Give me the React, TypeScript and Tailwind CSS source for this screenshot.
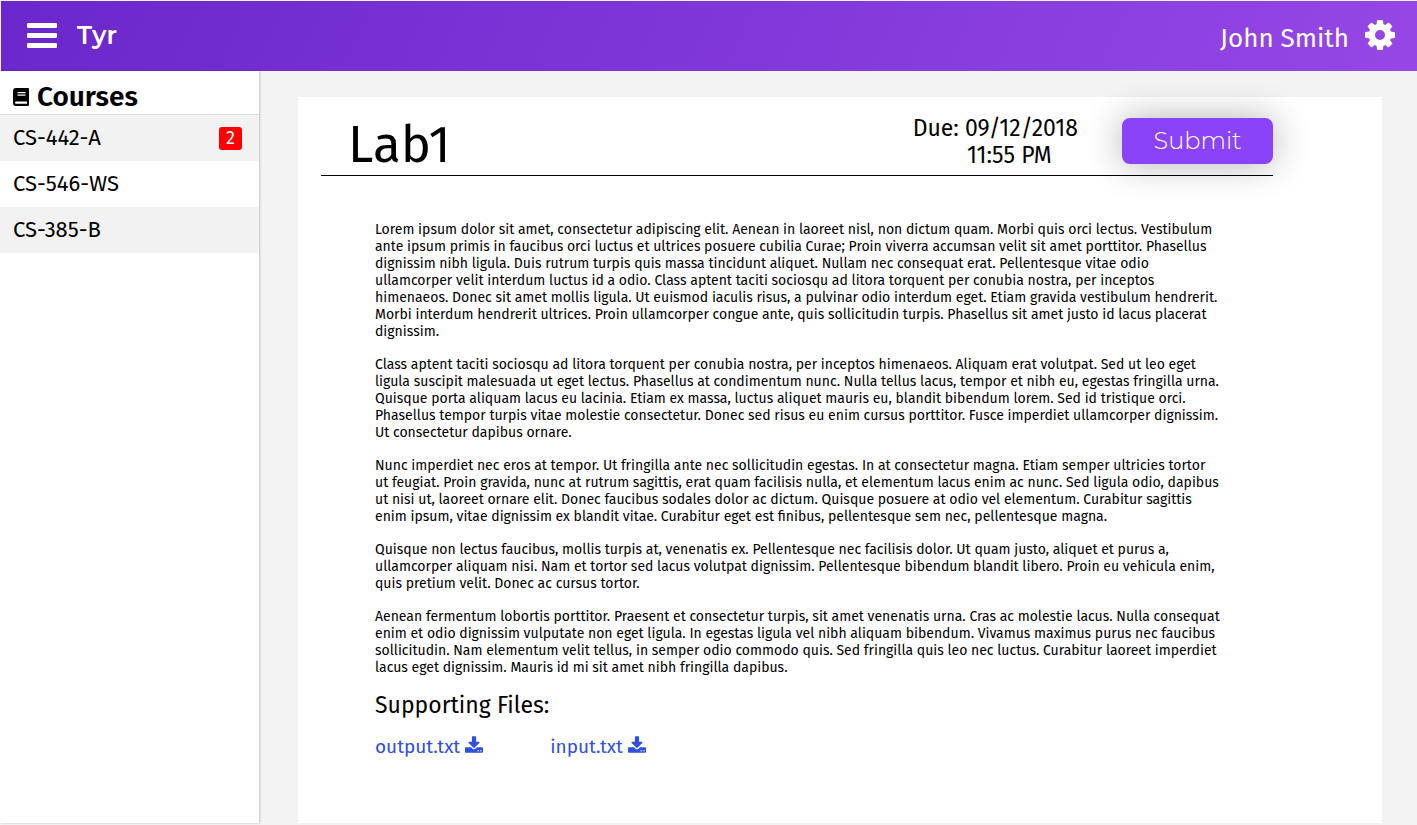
const courses = [
  { name: "CS-442-A", pending: 2 },
  { name: "CS-546-WS", pending: 0 },
  { name: "CS-385-B", pending: 0 },
];

const paragraphs = [
  "Lorem ipsum dolor sit amet, consectetur adipiscing elit. Aenean in laoreet nisl, non dictum quam. Morbi quis orci lectus. Vestibulum ante ipsum primis in faucibus orci luctus et ultrices posuere cubilia Curae; Proin viverra accumsan velit sit amet porttitor. Phasellus dignissim nibh ligula. Duis rutrum turpis quis massa tincidunt aliquet. Nullam nec consequat erat. Pellentesque vitae odio ullamcorper velit interdum luctus id a odio. Class aptent taciti sociosqu ad litora torquent per conubia nostra, per inceptos himenaeos. Donec sit amet mollis ligula. Ut euismod iaculis risus, a pulvinar odio interdum eget. Etiam gravida vestibulum hendrerit. Morbi interdum hendrerit ultrices. Proin ullamcorper congue ante, quis sollicitudin turpis. Phasellus sit amet justo id lacus placerat dignissim.",
  "Class aptent taciti sociosqu ad litora torquent per conubia nostra, per inceptos himenaeos. Aliquam erat volutpat. Sed ut leo eget ligula suscipit malesuada ut eget lectus. Phasellus at condimentum nunc. Nulla tellus lacus, tempor et nibh eu, egestas fringilla urna. Quisque porta aliquam lacus eu lacinia. Etiam ex massa, luctus aliquet mauris eu, blandit bibendum lorem. Sed id tristique orci. Phasellus tempor turpis vitae molestie consectetur. Donec sed risus eu enim cursus porttitor. Fusce imperdiet ullamcorper dignissim. Ut consectetur dapibus ornare.",
  "Nunc imperdiet nec eros at tempor. Ut fringilla ante nec sollicitudin egestas. In at consectetur magna. Etiam semper ultricies tortor ut feugiat. Proin gravida, nunc at rutrum sagittis, erat quam facilisis nulla, et elementum lacus enim ac nunc. Sed ligula odio, dapibus ut nisi ut, laoreet ornare elit. Donec faucibus sodales dolor ac dictum. Quisque posuere at odio vel elementum. Curabitur sagittis enim ipsum, vitae dignissim ex blandit vitae. Curabitur eget est finibus, pellentesque sem nec, pellentesque magna.",
  "Quisque non lectus faucibus, mollis turpis at, venenatis ex. Pellentesque nec facilisis dolor. Ut quam justo, aliquet et purus a, ullamcorper aliquam nisi. Nam et tortor sed lacus volutpat dignissim. Pellentesque bibendum blandit libero. Proin eu vehicula enim, quis pretium velit. Donec ac cursus tortor.",
  "Aenean fermentum lobortis porttitor. Praesent et consectetur turpis, sit amet venenatis urna. Cras ac molestie lacus. Nulla consequat enim et odio dignissim vulputate non eget ligula. In egestas ligula vel nibh aliquam bibendum. Vivamus maximus purus nec faucibus sollicitudin. Nam elementum velit tellus, in semper odio commodo quis. Sed fringilla quis leo nec luctus. Curabitur laoreet imperdiet lacus eget dignissim. Mauris id mi sit amet nibh fringilla dapibus.",
];

const files = ["output.txt", "input.txt"];

function MenuIcon() {
  return (
    <svg className="h-[25px] w-[30px]" viewBox="0 0 1536 1280" fill="currentColor" aria-hidden="true">
      <rect width="1536" height="256" rx="64" />
      <rect y="512" width="1536" height="256" rx="64" />
      <rect y="1024" width="1536" height="256" rx="64" />
    </svg>
  );
}

function GearIcon() {
  return (
    <svg className="size-[30px]" viewBox="0 128 1536 1536" fill="currentColor" aria-hidden="true">
      <path d="M1024 896q0-106-75-181t-181-75-181 75-75 181 75 181 181 75 181-75 75-181zm512-109v222q0 12-8 23t-20 13l-185 28q-19 54-39 91 35 50 107 138 10 12 10 25t-9 23q-27 37-99 108t-94 71q-12 0-26-9l-138-108q-44 23-91 38-16 136-29 186-7 28-36 28h-222q-14 0-24.5-8.5t-11.5-21.5l-28-184q-49-16-90-37l-141 107q-10 9-25 9-14 0-25-11-126-114-165-168-7-10-7-23 0-12 8-23 15-21 51-66.5t54-70.5q-27-50-41-99l-183-27q-13-2-21-12.5t-8-23.5v-222q0-12 8-23t19-13l186-28q14-46 39-92-40-57-107-138-10-12-10-24 0-10 9-23 26-36 98.5-107.5t94.5-71.5q13 0 26 10l138 107q44-23 91-38 16-136 29-186 7-28 36-28h222q14 0 24.5 8.5t11.5 21.5l28 184q49 16 90 37l142-107q9-9 24-9 13 0 25 10 129 119 165 170 7 8 7 22 0 12-8 23-15 21-51 66.5t-54 70.5q26 50 41 98l183 28q13 2 21 12.5t8 23.5z" />
    </svg>
  );
}

function BookIcon() {
  return (
    <svg className="h-[18px] w-4" viewBox="0 0 16 18" fill="currentColor" aria-hidden="true">
      <path
        fillRule="evenodd"
        d="M3 0H15a1 1 0 0 1 1 1V17a1 1 0 0 1-1 1H3a3 3 0 0 1-3-3V3a3 3 0 0 1 3-3zM4.5 4V5.2H12.5V4zM4.5 6.6V7.8H12.5V6.6zM3.2 13.4a1.2 1.2 0 0 0 0 2.4H14V13.4z"
      />
    </svg>
  );
}

function DownloadIcon() {
  return (
    <svg className="h-[17px] w-[18px]" viewBox="64 0 1664 1536" fill="currentColor" aria-hidden="true">
      <path d="M1344 1344q0-26-19-45t-45-19-45 19-19 45 19 45 45 19 45-19 19-45zm256 0q0-26-19-45t-45-19-45 19-19 45 19 45 45 19 45-19 19-45zm128-224v320q0 40-28 68t-68 28h-1472q-40 0-68-28t-28-68v-320q0-40 28-68t68-28h465l135 136q58 56 136 56t136-56l136-136h464q40 0 68 28t28 68zm-325-569q17 41-14 70l-448 448q-18 19-45 19t-45-19l-448-448q-31-29-14-70 17-39 59-39h256v-448q0-26 19-45t45-19h256q26 0 45 19t19 45v448h256q42 0 59 39z" />
    </svg>
  );
}

function TopBar() {
  return (
    <div className="pt-px pl-px">
      <header className="flex h-[70px] items-center justify-between bg-linear-[115deg] from-[#6a27cb] to-[#9647e6] pr-[22px] pl-[26px] text-white">
        <div className="flex items-center gap-5 pb-0.5">
          <button type="button" aria-label="Menu">
            <MenuIcon />
          </button>
          <span className="font-['Montserrat','Inter',sans-serif] text-[25px] leading-8 font-semibold">Tyr</span>
        </div>
        <div className="flex items-center gap-4 pb-0.5">
          <span className="pt-2 text-[26px] leading-8">John Smith</span>
          <button type="button" aria-label="Settings">
            <GearIcon />
          </button>
        </div>
      </header>
    </div>
  );
}

function Sidebar() {
  return (
    <aside className="w-[259px] shrink-0 bg-white shadow-[1px_0_2px_rgba(0,0,0,0.2)]">
      <h2 className="flex h-11 items-center gap-2 border-b border-[#dcdcdc] px-[13px] pt-2 text-[28px] leading-8 font-semibold">
        <BookIcon />
        Courses
      </h2>
      <nav>
        {courses.map((course) => (
          <a
            key={course.name}
            href="#"
            className="flex h-[46px] items-center justify-between pr-[17px] pl-[13px] text-[22px] leading-7 odd:bg-[#f2f2f2]"
          >
            {course.name}
            {course.pending > 0 && (
              <span className="flex size-[23px] items-center justify-center rounded-[3px] bg-[#ff0000] text-[18px] leading-6 text-white">
                {course.pending}
              </span>
            )}
          </a>
        ))}
      </nav>
    </aside>
  );
}

export default function App() {
  return (
    <div className="flex min-h-screen flex-col bg-[#f3f3f3] pb-0.5 font-['Fira_Sans','Noto_Sans',sans-serif] text-black">
      <TopBar />
      <div className="flex grow">
        <Sidebar />
        <main className="flex grow pt-[26px] pr-[35px] pl-[39px]">
          <article className="grow bg-white pr-[109px] pl-[23px]">
            <div className="flex h-[79px] justify-between border-b border-black pl-[27px]">
              <h1 className="pt-[17px] text-[51px] leading-[62px]">Lab1</h1>
              <div className="flex gap-11 pt-[17px]">
                <p className="pt-px text-center text-[23px] leading-[27px]">
                  Due: 09/12/2018
                  <br />
                  <span className="pl-7">11:55 PM</span>
                </p>
                <button
                  type="button"
                  className="mt-1 h-[46px] w-[151px] rounded-lg bg-[#8a43f8] font-['Montserrat','Inter',sans-serif] text-[24px] leading-8 font-light text-white shadow-[0_0_36px_rgba(0,0,0,0.3)]"
                >
                  Submit
                </button>
              </div>
            </div>
            <div className="pt-[45px] pr-[51px] pl-[54px]">
              <div className="space-y-4 text-sm leading-[17px]">
                {paragraphs.map((text) => (
                  <p key={text}>{text}</p>
                ))}
              </div>
              <h2 className="pt-4 text-[23px] leading-[27px]">Supporting Files:</h2>
              <ul className="flex gap-[67px] pt-4 text-[19px] leading-6 text-[#2f4fdf]">
                {files.map((file) => (
                  <li key={file}>
                    <a href="#" className="flex items-baseline gap-[5px]">
                      {file}
                      <DownloadIcon />
                    </a>
                  </li>
                ))}
              </ul>
            </div>
          </article>
        </main>
      </div>
    </div>
  );
}
